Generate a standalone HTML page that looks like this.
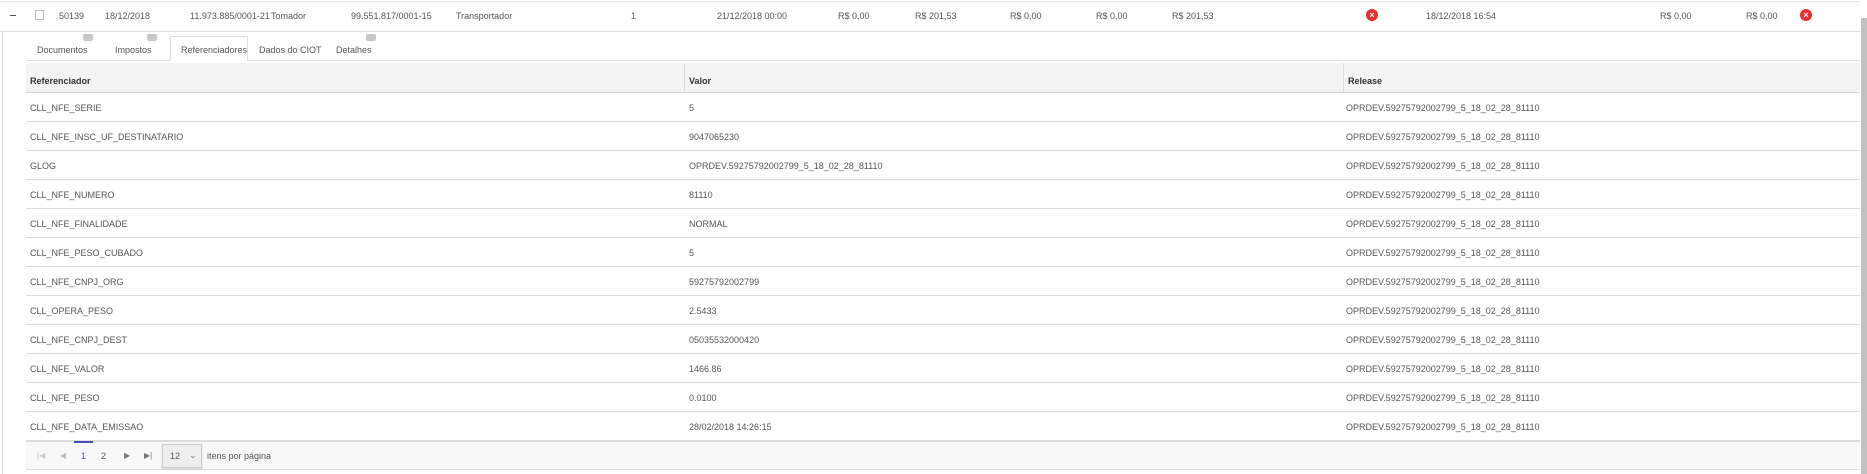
<!DOCTYPE html>
<html><head><meta charset="utf-8"><style>
*{margin:0;padding:0;box-sizing:border-box}
body{width:1867px;height:474px;background:#fff;font-family:"Liberation Sans",sans-serif;font-size:9px;color:#555;position:relative;overflow:hidden}
.a{position:absolute;white-space:nowrap}
.t{top:11px}
.x{width:12px;height:12px;border-radius:50%;background:#e8302f;color:#fff;font-size:9px;font-weight:bold;text-align:center;line-height:12px;top:9px}
.tab{top:45px}
.bd{position:absolute;width:10px;height:7px;background:#c8c8c8;border-radius:2px;top:34px}
.row{position:absolute;left:26px;width:1834px;height:29px;border-bottom:1px solid #dcdcdc}
.row span{position:absolute;top:10px;white-space:nowrap}
</style></head><body>
<div class="a" style="left:0;top:0;width:1860px;height:2px;border-bottom:1px solid #e6e6e6"></div>
<div class="a" style="left:0;top:31px;width:1860px;height:1px;background:#ddd"></div>
<div class="a" style="left:2px;top:32px;width:1px;height:442px;background:#ddd"></div>
<div class="a" style="left:10px;top:15px;width:6px;height:1px;background:#555"></div>
<div class="a" style="left:35px;top:10px;width:9px;height:10px;border:1px solid #bbb"></div>
<div class="a t" style="left:59px">50139</div>
<div class="a t" style="left:105px">18/12/2018</div>
<div class="a t" style="left:190px">11.973.885/0001-21</div>
<div class="a t" style="left:271px">Tomador</div>
<div class="a t" style="left:351px">99.551.817/0001-15</div>
<div class="a t" style="left:456px">Transportador</div>
<div class="a t" style="left:631px">1</div>
<div class="a t" style="left:717px">21/12/2018 00:00</div>
<div class="a t" style="left:838px">R$ 0,00</div>
<div class="a t" style="left:915px">R$ 201,53</div>
<div class="a t" style="left:1010px">R$ 0,00</div>
<div class="a t" style="left:1096px">R$ 0,00</div>
<div class="a t" style="left:1172px">R$ 201,53</div>
<div class="a x" style="left:1366px">×</div>
<div class="a t" style="left:1426px">18/12/2018 16:54</div>
<div class="a t" style="left:1660px">R$ 0,00</div>
<div class="a t" style="left:1746px">R$ 0,00</div>
<div class="a x" style="left:1800px">×</div>
<div class="a" style="left:1861px;top:18px;width:6px;height:456px;background:#c1c1c1"></div>

<div class="a tab" style="left:37px">Documentos</div><div class="bd" style="left:83px"></div>
<div class="a tab" style="left:115px">Impostos</div><div class="bd" style="left:147px"></div>
<div class="a" style="left:170px;top:36px;width:78px;height:25px;border:1px solid #ddd;border-bottom:1px solid #fff;background:#fff"></div>
<div class="a tab" style="left:181px">Referenciadores</div>
<div class="a tab" style="left:259px">Dados do CIOT</div>
<div class="a tab" style="left:336px">Detalhes</div><div class="bd" style="left:366px"></div>
<div class="a" style="left:26px;top:60px;width:1834px;height:1px;background:#ddd"></div>
<div class="a" style="left:170px;top:60px;width:77px;height:1px;background:#fff"></div>

<div class="a" style="left:26px;top:63px;width:1834px;height:30px;background:#f3f3f3;border-bottom:1px solid #d8d8d8"></div>
<div class="a" style="left:684px;top:63px;width:1px;height:29px;background:#ddd"></div>
<div class="a" style="left:1343px;top:63px;width:1px;height:29px;background:#ddd"></div>
<div class="a" style="left:30px;top:76px;font-weight:bold;color:#333">Referenciador</div>
<div class="a" style="left:689px;top:76px;font-weight:bold;color:#333">Valor</div>
<div class="a" style="left:1348px;top:76px;font-weight:bold;color:#333">Release</div>

<div class="row" style="top:93px"><span style="left:4px">CLL_NFE_SERIE</span><span style="left:663px">5</span><span style="left:1320px">OPRDEV.59275792002799_5_18_02_28_81110</span></div>
<div class="row" style="top:122px"><span style="left:4px">CLL_NFE_INSC_UF_DESTINATARIO</span><span style="left:663px">9047065230</span><span style="left:1320px">OPRDEV.59275792002799_5_18_02_28_81110</span></div>
<div class="row" style="top:151px"><span style="left:4px">GLOG</span><span style="left:663px">OPRDEV.59275792002799_5_18_02_28_81110</span><span style="left:1320px">OPRDEV.59275792002799_5_18_02_28_81110</span></div>
<div class="row" style="top:180px"><span style="left:4px">CLL_NFE_NUMERO</span><span style="left:663px">81110</span><span style="left:1320px">OPRDEV.59275792002799_5_18_02_28_81110</span></div>
<div class="row" style="top:209px"><span style="left:4px">CLL_NFE_FINALIDADE</span><span style="left:663px">NORMAL</span><span style="left:1320px">OPRDEV.59275792002799_5_18_02_28_81110</span></div>
<div class="row" style="top:238px"><span style="left:4px">CLL_NFE_PESO_CUBADO</span><span style="left:663px">5</span><span style="left:1320px">OPRDEV.59275792002799_5_18_02_28_81110</span></div>
<div class="row" style="top:267px"><span style="left:4px">CLL_NFE_CNPJ_ORG</span><span style="left:663px">59275792002799</span><span style="left:1320px">OPRDEV.59275792002799_5_18_02_28_81110</span></div>
<div class="row" style="top:296px"><span style="left:4px">CLL_OPERA_PESO</span><span style="left:663px">2.5433</span><span style="left:1320px">OPRDEV.59275792002799_5_18_02_28_81110</span></div>
<div class="row" style="top:325px"><span style="left:4px">CLL_NFE_CNPJ_DEST</span><span style="left:663px">05035532000420</span><span style="left:1320px">OPRDEV.59275792002799_5_18_02_28_81110</span></div>
<div class="row" style="top:354px"><span style="left:4px">CLL_NFE_VALOR</span><span style="left:663px">1466.86</span><span style="left:1320px">OPRDEV.59275792002799_5_18_02_28_81110</span></div>
<div class="row" style="top:383px"><span style="left:4px">CLL_NFE_PESO</span><span style="left:663px">0.0100</span><span style="left:1320px">OPRDEV.59275792002799_5_18_02_28_81110</span></div>
<div class="row" style="top:412px"><span style="left:4px">CLL_NFE_DATA_EMISSAO</span><span style="left:663px">28/02/2018 14:26:15</span><span style="left:1320px">OPRDEV.59275792002799_5_18_02_28_81110</span></div>

<div class="a" style="left:26px;top:441px;width:1834px;height:29px;background:#f8f8f8;border-top:1px solid #ddd;border-bottom:1px solid #ddd"></div>
<div class="a" style="left:74px;top:441px;width:19px;height:2px;background:#3f51b5"></div>
<div class="a" style="left:37px;top:451px;color:#ccc;font-size:8px">|◀</div>
<div class="a" style="left:60px;top:451px;color:#bbb;font-size:8px">◀</div>
<div class="a" style="left:81px;top:451px;color:#2a5db0">1</div>
<div class="a" style="left:101px;top:451px;color:#555">2</div>
<div class="a" style="left:124px;top:451px;color:#777;font-size:8px">▶</div>
<div class="a" style="left:144px;top:451px;color:#777;font-size:8px">▶|</div>
<div class="a" style="left:162px;top:444px;width:40px;height:24px;background:#eee;border:1px solid #ccc;box-shadow:0 1px 2px rgba(0,0,0,.15)"></div>
<div class="a" style="left:170px;top:451px;color:#555">12</div>
<div class="a" style="left:189px;top:450px;color:#777;font-size:9px">⌄</div>
<div class="a" style="left:207px;top:451px;color:#555">itens por página</div>
</body></html>
